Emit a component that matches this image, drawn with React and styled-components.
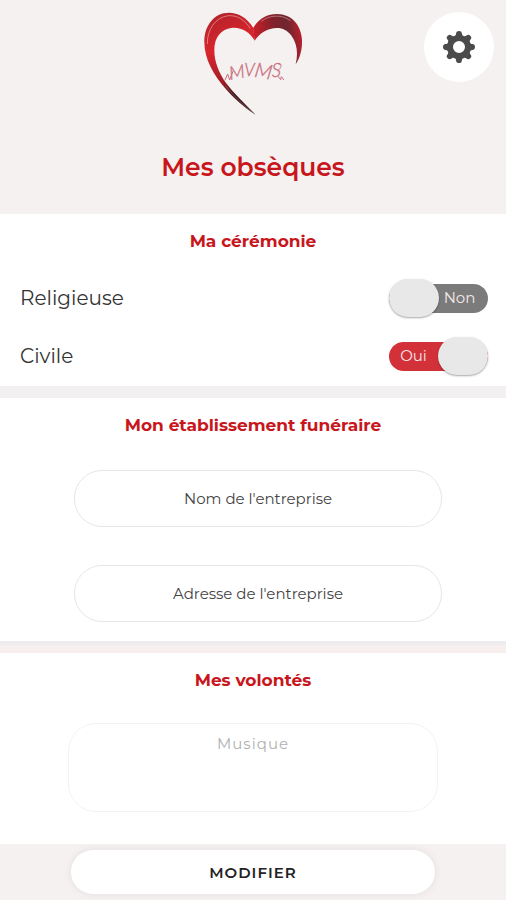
import React, { useState } from 'react';
import styled, { createGlobalStyle } from 'styled-components';

const GlobalStyle = createGlobalStyle`
    * {
        box-sizing: border-box;
    }
    body {
        margin: 0;
        background-color: #f4f1f0;
        color: #333333;
        font-family: Montserrat, Inter, 'Liberation Sans', sans-serif;
    }
    input,
    textarea,
    button {
        font-family: inherit;
    }
`;

const Page = styled.div`
    display: flex;
    flex-direction: column;
    min-height: 100vh;
`;

const Header = styled.header`
    position: relative;
    display: flex;
    flex-direction: column;
    align-items: center;
    padding: 10px 12px 31px;
`;

const SettingsButton = styled.button`
    position: absolute;
    top: 12px;
    right: 12px;
    display: flex;
    align-items: center;
    justify-content: center;
    width: 70px;
    height: 70px;
    padding: 0;
    border: none;
    border-radius: 50%;
    background-color: #ffffff;
    cursor: pointer;
`;

const PageTitle = styled.h1`
    margin: 34px 0 0;
    color: #c8161d;
    font-size: 25px;
    font-weight: 600;
    line-height: 32px;
`;

const Sections = styled.main`
    display: flex;
    flex-direction: column;
    flex: 1;
`;

const Section = styled.section`
    padding: 15px 0 ${(props) => props.$bottom}px;
    background-color: #ffffff;
    &:last-child {
        flex: 1;
    }
`;

const Divider = styled.div`
    height: 12px;
    background: ${(props) => (props.$warm ? 'linear-gradient(#eeecee 3px, #f7eeee 5px)' : '#f2f0f0')};
`;

const SectionTitle = styled.h2`
    margin: 0;
    color: #c8161d;
    font-size: 17px;
    font-weight: 700;
    line-height: 24px;
    text-align: center;
`;

const ChoiceList = styled.div`
    padding: 16px 18px 0 20px;
`;

const ChoiceRow = styled.div`
    display: flex;
    align-items: center;
    justify-content: space-between;
    height: 58px;
`;

const ChoiceLabel = styled.label`
    font-size: 20px;
    line-height: 24px;
`;

const SwitchTrack = styled.div`
    position: relative;
    display: flex;
    flex-direction: ${(props) => (props.$on ? 'row-reverse' : 'row')};
    align-items: center;
    width: 99px;
    height: 29px;
    border-radius: 15px;
    background-color: ${(props) => (props.$on ? '#d3313a' : '#7b7b7b')};
`;

const SwitchInput = styled.input`
    position: absolute;
    inset: 0;
    width: 100%;
    height: 100%;
    margin: 0;
    opacity: 0;
    cursor: pointer;
`;

const SwitchKnob = styled.span`
    flex: none;
    width: 50px;
    height: 38px;
    border-radius: 19px;
    background-color: #e8e8e8;
    box-shadow: 0 1px 2px rgba(0, 0, 0, 0.35);
`;

const SwitchText = styled.span`
    flex: 1;
    padding-right: ${(props) => (props.$on ? 0 : 8)}px;
    color: #f3e9e9;
    font-size: 15px;
    line-height: 20px;
    text-align: center;
`;

const FieldList = styled.div`
    display: flex;
    flex-direction: column;
    align-items: center;
    gap: 38px;
    padding: ${(props) => (props.$shifted ? '33px 0 0 10px' : '31px 0 0')};
`;

const TextField = styled.input`
    width: 74%;
    height: 57px;
    padding: 0 20px;
    border: 1px solid #e6e6e6;
    border-radius: 28px;
    background-color: #ffffff;
    color: #333333;
    font-size: 15px;
    text-align: center;
    &::placeholder {
        color: #444444;
        opacity: 1;
    }
`;

const TextArea = styled.textarea`
    display: block;
    width: 73%;
    height: 89px;
    padding: 10px 20px;
    border: 1px solid #f3f3f3;
    border-radius: 28px;
    background-color: #ffffff;
    color: #333333;
    font-size: 15px;
    letter-spacing: 1px;
    line-height: 20px;
    text-align: center;
    resize: none;
    &::placeholder {
        color: #b0b0b0;
        opacity: 1;
    }
`;

const Footer = styled.footer`
    display: flex;
    justify-content: center;
    padding: 6px 0;
`;

const EditButton = styled.button`
    width: 72%;
    height: 44px;
    padding: 0;
    border: none;
    border-radius: 22px;
    background-color: #ffffff;
    box-shadow: 0 0 8px rgba(0, 0, 0, 0.08);
    color: #222222;
    font-size: 15px;
    font-weight: 600;
    letter-spacing: 1px;
    cursor: pointer;
`;

const HeartLogo = () => (
    <svg width="100" height="107" viewBox="40 30 300 321" role="img" aria-label="MVMS">
        <defs>
            <linearGradient id="leftLobe" gradientUnits="userSpaceOnUse" x1="60" y1="50" x2="190" y2="344">
                <stop offset="0" stopColor="#b3232b" />
                <stop offset="0.3" stopColor="#d9252c" />
                <stop offset="0.6" stopColor="#a51e27" />
                <stop offset="0.74" stopColor="#431419" />
                <stop offset="1" stopColor="#2c1416" />
            </linearGradient>
            <linearGradient id="rightLobe" gradientUnits="userSpaceOnUse" x1="190" y1="110" x2="330" y2="90">
                <stop offset="0" stopColor="#cf2028" />
                <stop offset="0.45" stopColor="#84202a" />
                <stop offset="0.75" stopColor="#6e2630" />
                <stop offset="1" stopColor="#b3222b" />
            </linearGradient>
        </defs>
        <path
            fill="url(#leftLobe)"
            d="M191 84C172 52 145 38 118 38C72 38 44 78 44 125C44 178 72 224 106 264C132 294 164 323 198 344C166 312 133 281 109 249C86 216 74 184 74 150C74 110 96 88 125 84C155 81 180 96 195 122Z"
        />
        <path
            fill="url(#rightLobe)"
            d="M190 85C206 57 231 42 262 42C306 42 335 76 337 120C338 149 331 174 318 193C326 160 322 130 306 108C294 92 279 84 262 84C234 84 210 99 195 122Z"
        />
        <path fill="none" stroke="#ee9c9b" strokeWidth="3" opacity="0.7" d="M53 132C52 92 75 52 116 47C145 45 167 62 182 86" />
        <path fill="none" stroke="#d9a9ab" strokeWidth="3" opacity="0.6" d="M215 64C240 44 277 43 302 62" />
        <path fill="none" stroke="#b98d90" strokeWidth="2" opacity="0.7" d="M107 257C132 288 160 315 190 338" />
        <g fill="#c96f7d" stroke="#c96f7d" strokeWidth="1" fontFamily="Lato, sans-serif" fontStyle="italic" fontWeight="300">
            <text x="122" y="240" fontSize="56" transform="rotate(-10 122 240)">M</text>
            <text x="164" y="228" fontSize="52">V</text>
            <text x="192" y="230" fontSize="62" transform="rotate(10 192 230)">M</text>
            <text x="246" y="232" fontSize="56">S</text>
        </g>
        <g fill="none" stroke="#c96f7d" strokeWidth="3" strokeLinecap="round" strokeLinejoin="round">
            <path d="M106 240L114 222L120 240L130 214" />
            <path d="M264 212C276 204 278 190 268 190" />
            <path d="M266 230L273 239L275 230L282 239" />
        </g>
    </svg>
);

const GearIcon = () => (
    <svg width="32" height="32" viewBox="-16 -16 32 32" fill="#4b4b4b" aria-hidden="true">
        <circle r="9" fill="none" stroke="#4b4b4b" strokeWidth="6" />
        {[0, 45, 90, 135, 180, 225, 270, 315].map((angle) => (
            <path
                key={angle}
                transform={`rotate(${angle})`}
                d="M-5 -10C-3.6 -11 -3 -12 -2.9 -13.4C-2.8 -15.3 -1.6 -16 0 -16C1.6 -16 2.8 -15.3 2.9 -13.4C3 -12 3.6 -11 5 -10Z"
            />
        ))}
    </svg>
);

const Choice = ({ id, label, checked, onChange }) => (
    <ChoiceRow>
        <ChoiceLabel htmlFor={id}>{label}</ChoiceLabel>
        <SwitchTrack $on={checked}>
            <SwitchKnob />
            <SwitchText $on={checked}>{checked ? 'Oui' : 'Non'}</SwitchText>
            <SwitchInput id={id} type="checkbox" checked={checked} onChange={(e) => onChange(e.target.checked)} />
        </SwitchTrack>
    </ChoiceRow>
);

const App = () => {
    const [religious, setReligious] = useState(false);
    const [civil, setCivil] = useState(true);

    return (
        <Page>
            <GlobalStyle />
            <Header>
                <HeartLogo />
                <PageTitle>Mes obsèques</PageTitle>
                <SettingsButton type="button" aria-label="Paramètres">
                    <GearIcon />
                </SettingsButton>
            </Header>
            <Sections>
                <Section $bottom={1}>
                    <SectionTitle>Ma cérémonie</SectionTitle>
                    <ChoiceList>
                        <Choice id="religieuse" label="Religieuse" checked={religious} onChange={setReligious} />
                        <Choice id="civile" label="Civile" checked={civil} onChange={setCivil} />
                    </ChoiceList>
                </Section>
                <Divider />
                <Section $bottom={19}>
                    <SectionTitle>Mon établissement funéraire</SectionTitle>
                    <FieldList $shifted>
                        <TextField type="text" aria-label="Nom de l'entreprise" placeholder="Nom de l'entreprise" />
                        <TextField type="text" aria-label="Adresse de l'entreprise" placeholder="Adresse de l'entreprise" />
                    </FieldList>
                </Section>
                <Divider $warm />
                <Section $bottom={32}>
                    <SectionTitle>Mes volontés</SectionTitle>
                    <FieldList>
                        <TextArea aria-label="Musique" placeholder="Musique" />
                    </FieldList>
                </Section>
            </Sections>
            <Footer>
                <EditButton type="button">MODIFIER</EditButton>
            </Footer>
        </Page>
    );
};

export default App;
